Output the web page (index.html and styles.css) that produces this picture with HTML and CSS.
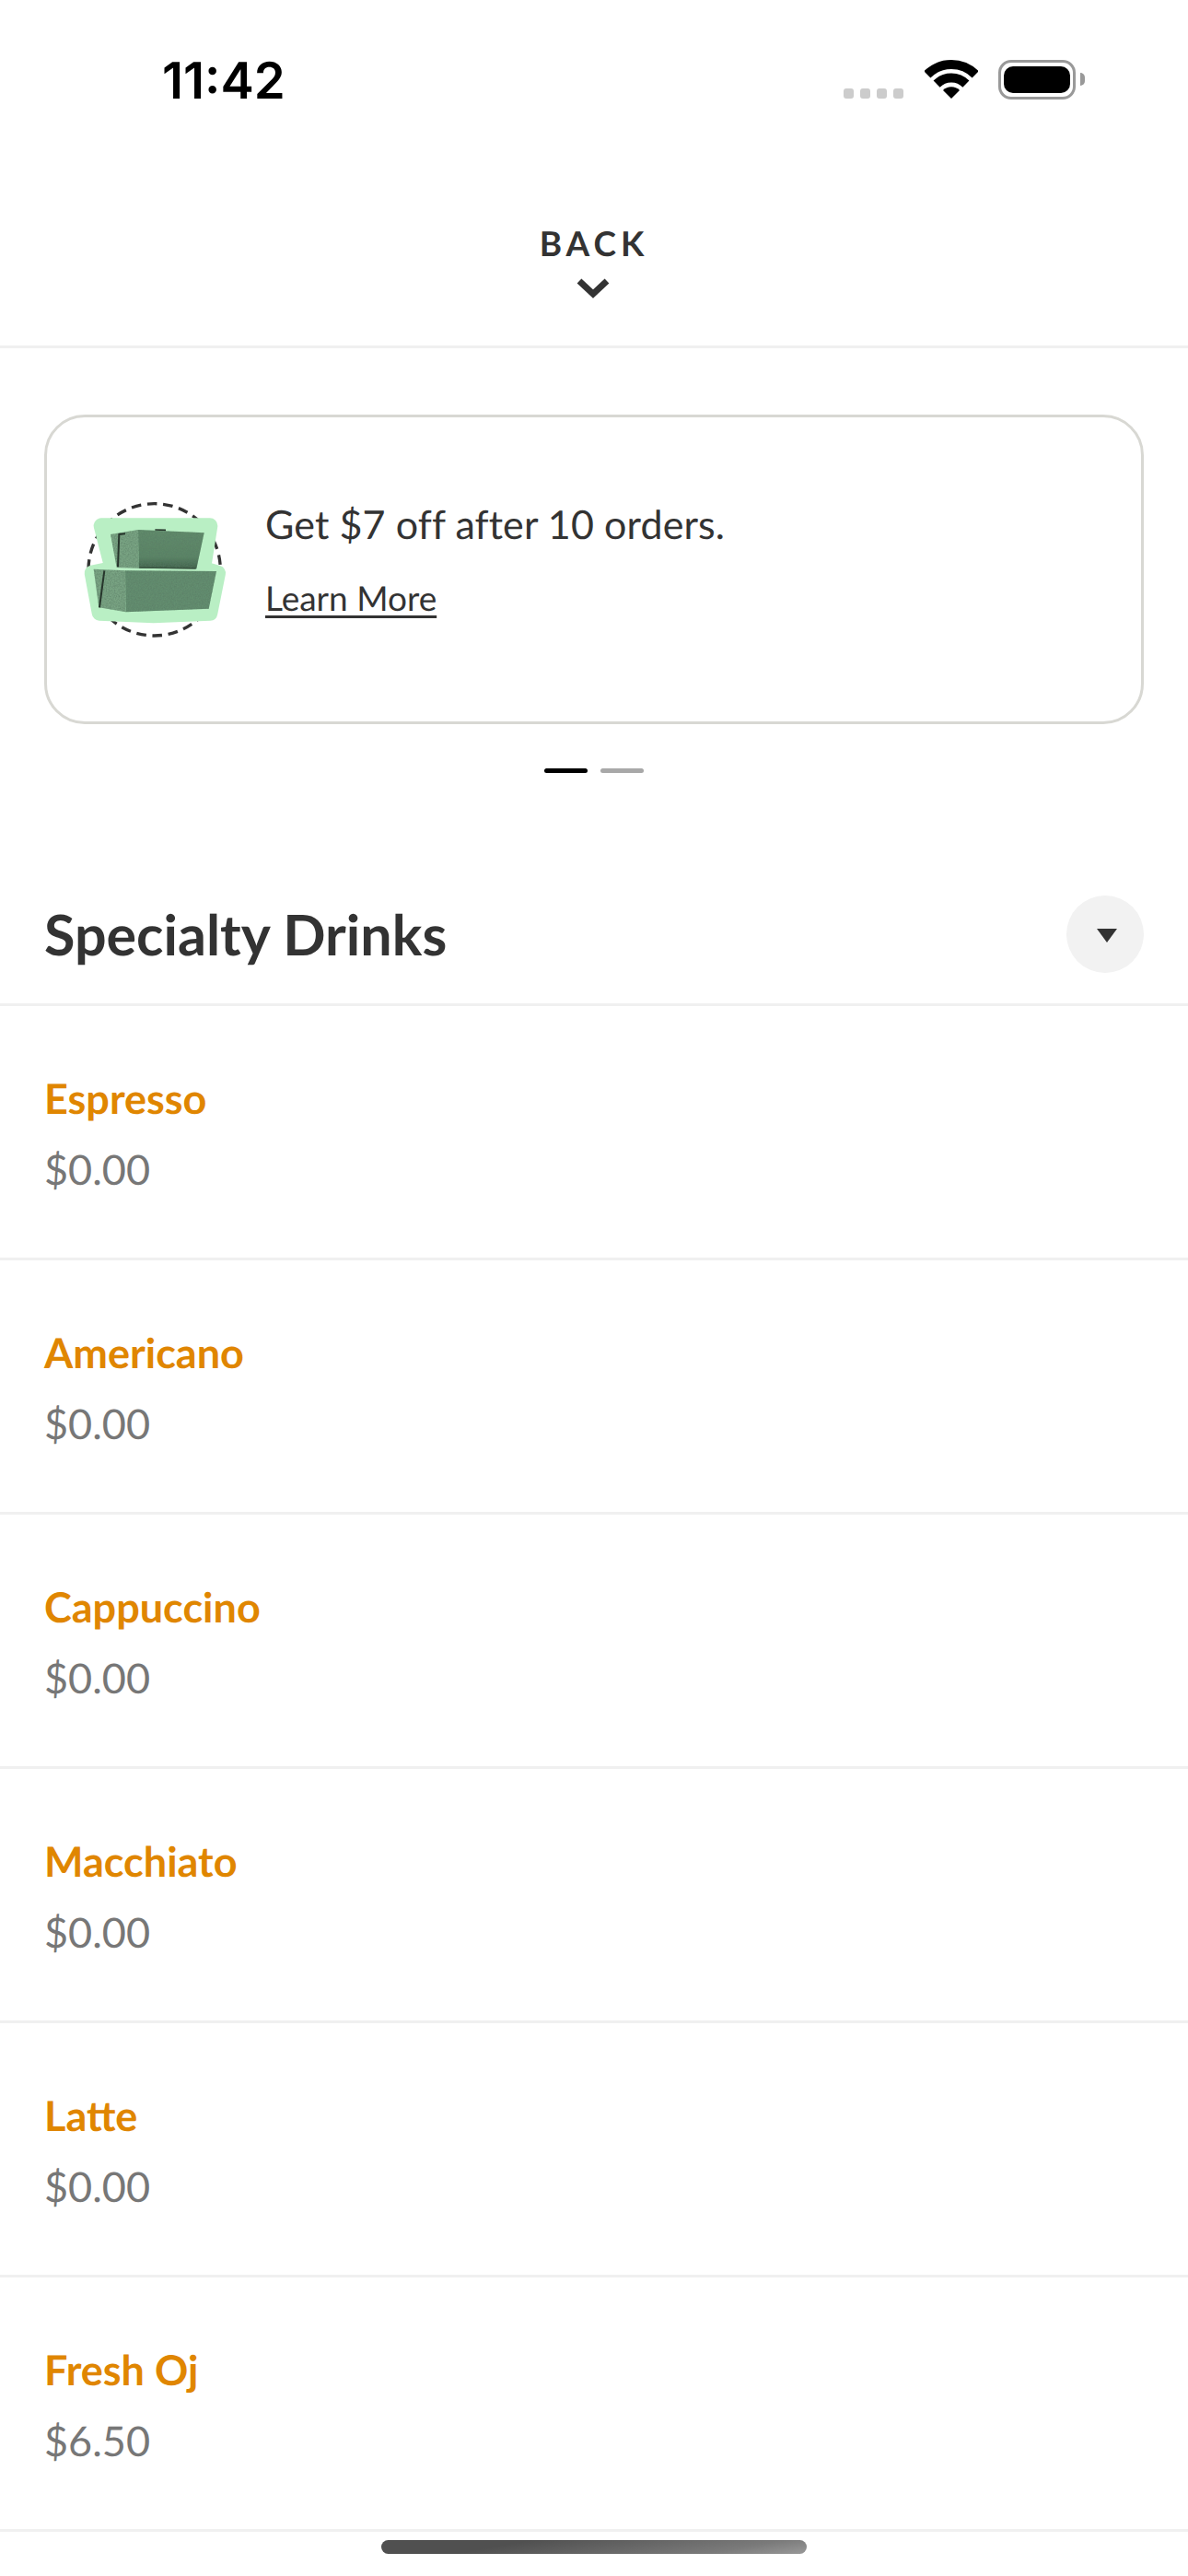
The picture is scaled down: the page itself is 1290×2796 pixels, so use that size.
FILE: index.html
```html
<!DOCTYPE html>
<html lang="en">
<head>
    <meta charset="utf-8">
    <title>Specialty Drinks</title>
    <meta name="viewport" content="width=device-width, initial-scale=1">
    <link rel="stylesheet" href="styles.css">
</head>
<body>

<div class="screen">

    <div class="status-bar">
        <span class="status-time">11:42</span>
        <div class="status-icons">
            <div class="signal-dots"><i></i><i></i><i></i><i></i></div>
            <svg class="wifi" width="58" height="42" viewBox="0 0 58 42">
                <path d="M2.84 15.84 A37 37 0 0 1 55.16 15.84" fill="none" stroke="#000" stroke-width="10"/>
                <path d="M13.1 26.1 A22.5 22.5 0 0 1 44.9 26.1" fill="none" stroke="#000" stroke-width="10"/>
                <path d="M20 33 A12.7 12.7 0 0 1 38 33 L29 42 Z" fill="#000"/>
            </svg>
            <div class="battery"><div class="battery-level"></div></div>
            <div class="battery-nub"></div>
        </div>
    </div>

    <header class="back-bar">
        <span class="back-label">BACK</span>
        <svg class="back-chevron" width="36" height="24" viewBox="0 0 36 24">
            <path d="M3 4 L18 18 L33 4" fill="none" stroke="#333" stroke-width="7"/>
        </svg>
    </header>

    <section class="promo">
        <div class="promo-card">
            <svg class="promo-image" width="170" height="160" viewBox="165 330 510 480">
                <defs>
                    <filter id="grain" x="0" y="0" width="100%" height="100%">
                        <feTurbulence type="fractalNoise" baseFrequency="0.22" numOctaves="3" result="n"/>
                        <feColorMatrix in="n" type="matrix" values="0 0 0 0 0.1  0 0 0 0 0.2  0 0 0 0 0.13  0 0 0 1.2 -0.35" result="d"/>
                        <feComposite in="d" in2="SourceAlpha" operator="in" result="t"/>
                        <feMerge><feMergeNode in="SourceGraphic"/><feMergeNode in="t"/></feMerge>
                    </filter>
                    <linearGradient id="upper-side" x1="0" y1="0" x2="0" y2="1">
                        <stop offset="0" stop-color="#618c6c"/>
                        <stop offset="0.7" stop-color="#5b8566"/>
                        <stop offset="1" stop-color="#3f5f49"/>
                    </linearGradient>
                </defs>
                <circle cx="413" cy="565" r="215" fill="none" stroke="#333" stroke-width="10" stroke-dasharray="32 20"/>
                <path d="M240 422 L594 422 L572 562 L620 576 L594 706 L410 714 L234 706 L210 576 L276 562 Z" fill="#b9efc4" stroke="#b9efc4" stroke-width="50" stroke-linejoin="round"/>
                <g filter="url(#grain)">
                    <path d="M270 450 L360 435 L362 560 L290 558 Z" fill="#7aa584"/>
                    <path d="M360 435 L575 445 L550 562 L362 560 Z" fill="url(#upper-side)"/>
                    <path d="M215 563 L318 568 L320 703 L232 688 Z" fill="#7aa584"/>
                    <path d="M318 568 L615 570 L590 692 L320 703 Z" fill="#638e6f"/>
                </g>
                <path d="M318 448 L298 450 L294 556" fill="none" stroke="#26352b" stroke-width="6"/>
                <path d="M250 568 L234 688" fill="none" stroke="#26352b" stroke-width="6"/>
                <path d="M415 435 L450 436" fill="none" stroke="#26352b" stroke-width="5"/>
                <path d="M364 558 L548 561" fill="none" stroke="#3c5744" stroke-width="5"/>
            </svg>
            <div class="promo-text">
                <p class="promo-title">Get $7 off after 10 orders.</p>
                <a class="promo-link">Learn More</a>
            </div>
        </div>
        <div class="pager"><i class="pager-on"></i><i></i></div>
    </section>

    <div class="menu-head">
        <h2>Specialty Drinks</h2>
        <button class="collapse-btn"><span class="caret"></span></button>
    </div>

    <ul class="menu-list">
        <li><h3>Espresso</h3><p>$0.00</p></li>
        <li><h3>Americano</h3><p>$0.00</p></li>
        <li><h3>Cappuccino</h3><p>$0.00</p></li>
        <li><h3>Macchiato</h3><p>$0.00</p></li>
        <li><h3>Latte</h3><p>$0.00</p></li>
        <li><h3>Fresh Oj</h3><p>$6.50</p></li>
    </ul>

    <div class="home-bar"></div>

</div>

</body>
</html>
```

FILE: styles.css
```css
body {
    margin: 0;
    padding: 0;
    background: #fff;
    font-family: Lato, "Open Sans", sans-serif;
    color: #333;
    text-rendering: geometricPrecision;
}

.screen {
    position: relative;
    width: 1290px;
    height: 2796px;
    overflow: hidden;
}

/* status bar */
.status-bar {
    display: flex;
    justify-content: space-between;
    height: 132px;
    padding: 0 112px 0 176px;
    box-sizing: border-box;
}

.status-time {
    font: 600 54.5px/64px Inter, sans-serif;
    margin-top: 56px;
    color: #000;
}

.status-icons {
    display: flex;
    align-items: flex-start;
    padding-top: 65px;
}

.signal-dots {
    display: flex;
    gap: 7px;
    margin: 31px 23px 0 0;
}

.signal-dots i {
    display: block;
    width: 11px;
    height: 11px;
    border-radius: 3px;
    background: #ccc;
}

.wifi {
    margin-right: 22px;
}

.battery {
    width: 84px;
    height: 43px;
    box-sizing: border-box;
    border: 3px solid #999;
    border-radius: 14px;
    padding: 4px 3px;
}

.battery-level {
    height: 100%;
    background: #000;
    border-radius: 10px;
}

.battery-nub {
    width: 5px;
    height: 14px;
    margin: 14px 0 0 5px;
    background: #999;
    border-radius: 0 7px 7px 0;
}

/* back */
.back-bar {
    display: flex;
    flex-direction: column;
    align-items: center;
    height: 246px;
    box-sizing: border-box;
    border-bottom: 3px solid #f0f0f0;
}

.back-label {
    font-size: 37px;
    line-height: 44px;
    font-weight: 700;
    letter-spacing: 5px;
    margin-top: 110px;
}

.back-chevron {
    margin: 15px 3px 0 0;
}

/* promo */
.promo {
    padding: 72px 48px 0;
}

.promo-card {
    display: flex;
    align-items: center;
    height: 336px;
    box-sizing: border-box;
    border: 3px solid #d8d8d3;
    border-radius: 44px;
    padding-left: 34px;
}

.promo-image {
    flex: none;
    margin: 3px 33px 0 0;
}

.promo-text {
    margin-bottom: 23px;
}

.promo-title {
    margin: 0;
    font-size: 43px;
    line-height: 56px;
    letter-spacing: 0.1px;
    font-variant-ligatures: none;
}

.promo-link {
    display: inline-block;
    margin-top: 29px;
    font-size: 37px;
    line-height: 44px;
    text-decoration: underline;
    text-decoration-thickness: 3px;
    text-underline-offset: 5px;
}

.pager {
    display: flex;
    justify-content: center;
    gap: 14px;
    margin-top: 48px;
}

.pager i {
    display: block;
    width: 47px;
    height: 5px;
    border-radius: 3px;
    background: #a8a8a8;
}

.pager i.pager-on {
    background: #000;
}

/* menu */
.menu-head {
    display: flex;
    justify-content: space-between;
    align-items: center;
    height: 250px;
    box-sizing: border-box;
    padding: 100px 48px 0;
}

.menu-head h2 {
    margin: 0;
    font-size: 61px;
    line-height: 72px;
    font-weight: 700;
}

.collapse-btn {
    display: flex;
    align-items: center;
    justify-content: center;
    width: 84px;
    height: 84px;
    padding: 0;
    border: 0;
    border-radius: 50%;
    background: #f2f2f2;
}

.caret {
    width: 0;
    height: 0;
    margin: 2px 0 0 3px;
    border-left: 11px solid transparent;
    border-right: 11px solid transparent;
    border-top: 15px solid #333;
}

.menu-list {
    list-style: none;
    margin: 0;
    padding: 0;
    border-top: 3px solid #f0f0f0;
}

.menu-list li {
    height: 276px;
    box-sizing: border-box;
    padding: 72px 48px 0;
    border-bottom: 3px solid #f0f0f0;
}

.menu-list h3 {
    margin: 0;
    font-size: 45px;
    line-height: 56px;
    font-weight: 700;
    color: #e08600;
}

.menu-list p {
    margin: 21px 0 0;
    font-size: 45px;
    line-height: 56px;
    color: #777;
}

.home-bar {
    position: absolute;
    left: 414px;
    bottom: 24px;
    width: 462px;
    height: 15px;
    border-radius: 8px;
    background: linear-gradient(170deg, #505050 30%, #7a7a7a 80%, #999 100%);
}
```
